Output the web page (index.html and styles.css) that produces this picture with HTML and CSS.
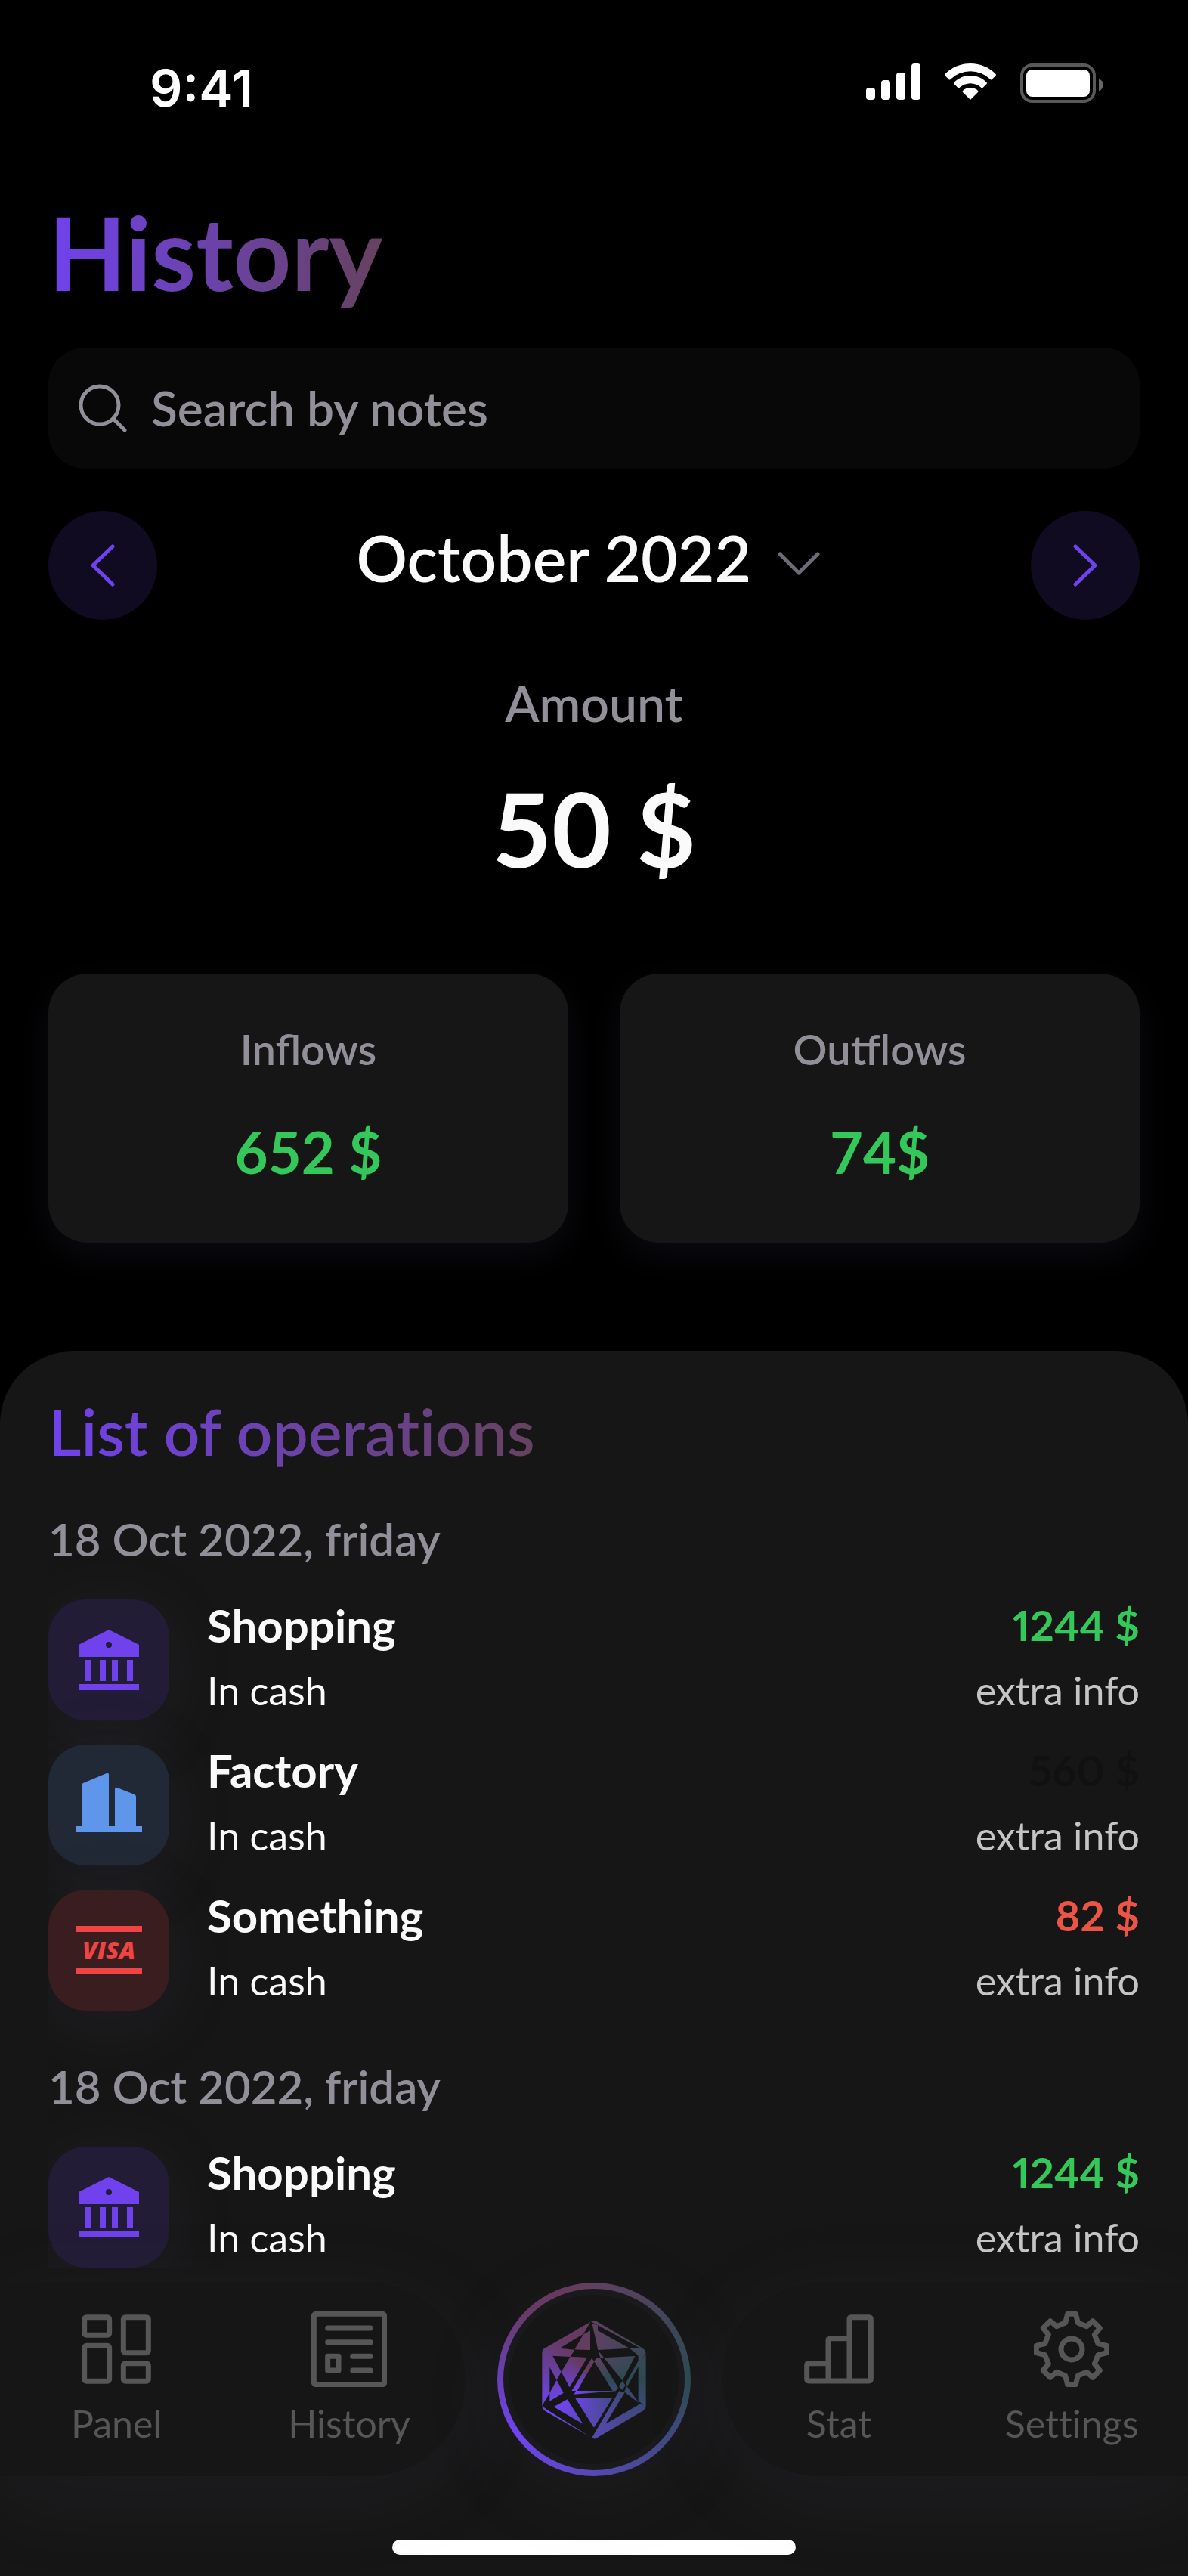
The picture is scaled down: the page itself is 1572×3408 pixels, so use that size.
FILE: index.html
```html
<!DOCTYPE html>
<html lang="en">
<head>
<meta charset="utf-8">
<meta name="viewport" content="width=device-width, initial-scale=1">
<title>History</title>
<link rel="stylesheet" href="styles.css">
</head>
<body>
<svg class="defs" width="0" height="0" aria-hidden="true">
  <defs>
    <symbol id="bank" viewBox="0 0 160 160">
      <path fill-rule="evenodd" d="M80 40 120 60V76H40V60ZM84 60a4 4 0 1 0-8 0a4 4 0 1 0 8 0Z"/>
      <path d="M48 80h8v28h-8zM68 80h8v28h-8zM84 80h8v28h-8zM104 80h8v28h-8zM40 112h80v8H40z"/>
    </symbol>
    <symbol id="building" viewBox="0 0 160 160">
      <path d="M36 108h8V54q0-2 2-3l31-13q3-1 3 2v68h8V59q0-3 3-2l23 9q2 1 2 3v39h8v8H36z"/>
    </symbol>
    <symbol id="visa" viewBox="0 0 160 160">
      <path d="M36 48h88v8H36zM36 104h88v8H36z"/>
      <text x="80" y="92" text-anchor="middle" class="visa-word">VISA</text>
    </symbol>
    <clipPath id="die" clipPathUnits="userSpaceOnUse">
      <path transform="translate(-8 -8) scale(.33333) translate(-156 -96)" d="M550 275L522 323 428 380 487 386 470 414 400 410 434 474 416 506 388 455V557L358 608V397Q358 386 368 380Z
        M549 310V387L487 385 522 325ZM470 413L537 417 467 535 434 474ZM416 506L443 557 388 590V557Z
        M555 420L565 433 497 549H475ZM475 549H638L650 550 485 563 492 549ZM557 284L579 288V310L705 380 580 387Z
        M552 274Q565 266 578 275L758 380H748L578 288 566 282Z
        M705 380H757Q768 386 770 398L768 402 740 450V412L732 402Z
        M770 402V610Q770 620 761 627L572 738Q564 742 556 735L664 550 686 556 610 680 740 605V598L761 607 740 588V450Z
        M581 390L603 417 590 420ZM573 418H587L660 537 650 550 638 549 565 433ZM603 418L727 411 677 508Z
        M677 510L689 527 676 546 662 531ZM768 402L697 530 690 518 740 430ZM695 532L742 597 684 553Z
        M490 579H636L564 695ZM458 583L520 680 404 613ZM358 608L374 622 552 733 372 631Q359 622 358 608Z"/>
    </clipPath>
  </defs>
</svg>

<header class="status">
  <span class="clock">9:41</span>
  <svg class="status-icons" width="314" height="52" viewBox="0 0 314 52" aria-hidden="true">
    <g fill="#fff">
      <rect x="0" y="32" width="12" height="16" rx="4"/>
      <rect x="20" y="22" width="12" height="26" rx="4"/>
      <rect x="40" y="12" width="12" height="36" rx="4"/>
      <rect x="60" y="0" width="12" height="48" rx="4"/>
      <path d="M138 0c13 0 25 5 33.500 14q1 1 0 2l-5 5q-1 1-2 0a38 38 0 0 0-53 0q-1 1-2 0l-5-5q-1-1 0-2C113 5 125 0 138 0z"/>
      <path d="M138 16c8 0 16 3 21.500 9q1 1 0 2l-5 5q-1 1-2 0a21 21 0 0 0-29 0q-1 1-2 0l-5-5q-1-1 0-2C122 19 130 16 138 16z"/>
      <path d="M138 32c4 0 7.500 1.500 10 4q1 1 0 2l-10 10-10-10q-1-1 0-2c2.500-2.500 6-4 10-4z"/>
      <rect x="212" y="8" width="84" height="36" rx="8"/>
    </g>
    <rect x="206" y="2" width="96" height="48" rx="14" fill="none" stroke="#595959" stroke-width="4"/>
    <path d="M308 20q6 3 6 8t-6 9z" fill="#666"/>
  </svg>
</header>

<main>
  <section class="summary">
    <h1 class="title"><span class="fade">History</span></h1>

    <label class="search">
      <svg width="64" height="64" viewBox="0 0 64 64" fill="none" stroke="#938f99" stroke-width="5" stroke-linecap="round" aria-hidden="true">
        <circle cx="28" cy="28" r="25"/><path d="M46 46 61 61"/>
      </svg>
      <input type="search" placeholder="Search by notes" aria-label="Search by notes">
    </label>

    <div class="month">
      <button class="round" type="button" aria-label="Previous month">
        <svg width="56" height="56" viewBox="0 0 56 56"><path d="M41 3 15 28 41 53"/></svg>
      </button>
      <div class="picker">
        <select aria-label="Month"><option>October 2022</option></select>
        <svg width="56" height="32" viewBox="0 0 56 32" aria-hidden="true"><path d="M3 3 28 28 53 3"/></svg>
      </div>
      <button class="round" type="button" aria-label="Next month">
        <svg width="56" height="56" viewBox="0 0 56 56"><path d="M15 3 41 28 15 53"/></svg>
      </button>
    </div>

    <div class="amount">
      <h2>Amount</h2>
      <p>50 $</p>
    </div>

    <div class="cards">
      <div class="card"><h3>Inflows</h3><p>652 $</p></div>
      <div class="card"><h3>Outflows</h3><p>74$</p></div>
    </div>
  </section>

  <section class="sheet">
    <h2 class="sheet-title"><span class="fade">List of operations</span></h2>
    <div class="operations">
      <h3 class="date">18 Oct 2022, friday</h3>
      <ul class="rows">
        <li class="row">
          <svg class="tile bank"><use href="#bank"/></svg>
          <div class="what"><strong>Shopping</strong><span>In cash</span></div>
          <div class="sum in"><strong>1244 $</strong><span>extra info</span></div>
        </li>
        <li class="row">
          <svg class="tile building"><use href="#building"/></svg>
          <div class="what"><strong>Factory</strong><span>In cash</span></div>
          <div class="sum muted"><strong>560 $</strong><span>extra info</span></div>
        </li>
        <li class="row">
          <svg class="tile visa"><use href="#visa"/></svg>
          <div class="what"><strong>Something</strong><span>In cash</span></div>
          <div class="sum out"><strong>82 $</strong><span>extra info</span></div>
        </li>
      </ul>
      <h3 class="date">18 Oct 2022, friday</h3>
      <ul class="rows">
        <li class="row">
          <svg class="tile bank"><use href="#bank"/></svg>
          <div class="what"><strong>Shopping</strong><span>In cash</span></div>
          <div class="sum in"><strong>1244 $</strong><span>extra info</span></div>
        </li>
      </ul>
    </div>

    <nav class="tabs">
      <div class="pill left">
        <a href="#panel">
          <svg viewBox="72 54 300 300"><rect x="95" y="77" width="99" height="71" rx="8"/><rect x="250" y="77" width="99" height="141" rx="8"/><rect x="95" y="190" width="99" height="141" rx="8"/><rect x="250" y="260" width="99" height="71" rx="8"/></svg>
          Panel
        </a>
        <a href="#history">
          <svg viewBox="996 54 300 300"><rect x="1006" y="64" width="280" height="280" rx="8"/><path d="M1061 120h170M1061 176h170M1160 232h71M1160 288h71M1061 232h43v56h-43z"/></svg>
          History
        </a>
      </div>
      <button class="hub" type="button" aria-label="Roll"><span class="disc"><span class="die"></span></span></button>
      <div class="pill right">
        <a href="#stat">
          <svg viewBox="60 54 300 300"><path d="M168 260H91q-8 0-8 8v54q0 8 8 8h238q8 0 8-8V85q0-8-8-8h-69q-8 0-8 8v245M252 161h-76q-8 0-8 8v161"/></svg>
          Stat
        </a>
        <a href="#settings">
          <svg viewBox="984 54 300 300"><path d="M1118 64h32l9 35 35 14 24-21 28 28-21 26 14 36 35 8v28l-35 9-14 35 21 26-28 28-24-21-35 14-9 35h-32l-9-35-35-14-25 21-28-28 21-26-14-35-34-9v-28l34-8 14-36-21-26 28-28 25 21 35-14z"/><circle cx="1134" cy="204" r="42"/></svg>
          Settings
        </a>
      </div>
    </nav>
    <div class="home"></div>
  </section>
</main>
</body>
</html>
```
FILE: styles.css
```css
* { box-sizing: border-box; margin: 0; padding: 0; }

body {
  background: #000;
  color: #fafafa;
  font-family: Lato, "Liberation Sans", sans-serif;
  font-size: 60px;
  line-height: 64px;
}
.defs { position: absolute; }
ul { list-style: none; }
button { border: 0; cursor: pointer; }

/* Status bar */
.status {
  display: flex;
  justify-content: space-between;
  align-items: center;
  padding: 72px 112px 0 198px;
}
.clock { font: 600 68px/88px Inter, sans-serif; color: #fff; }
.status-icons { margin-bottom: 12px; }

/* Summary */
.summary { padding: 94px 64px 0; }
.fade {
  display: inline-block;
  background: linear-gradient(90deg, #7042ee, #66425f);
  -webkit-background-clip: text;
  background-clip: text;
  color: transparent;
}
.title { font-size: 134px; line-height: 160px; font-weight: 700; }

.search {
  display: flex;
  align-items: center;
  gap: 32px;
  height: 160px;
  margin-top: 46px;
  padding: 0 40px;
  border-radius: 48px;
  background: #080808;
}
.search input {
  flex: 1;
  min-width: 0;
  border: 0;
  outline: 0;
  background: none;
  color: #fafafa;
  font: 600 64px/80px Lato, sans-serif;
}
.search input::placeholder { color: #938f99; opacity: 1; }

.month {
  display: flex;
  justify-content: space-between;
  align-items: flex-start;
  margin-top: 56px;
}
.round {
  display: grid;
  place-items: center;
  width: 144px;
  height: 144px;
  border-radius: 50%;
  background: #110b21;
}
.round path { fill: none; stroke: #7042ee; stroke-width: 5; stroke-linecap: round; stroke-linejoin: round; }
.picker { position: relative; margin-right: 16px; padding-top: 14px; }
.picker select {
  display: block;
  appearance: none;
  border: 0;
  padding-right: 88px;
  background: none;
  color: #fafafa;
  font: 600 84px/96px Lato, sans-serif;
}
.picker svg { position: absolute; right: 0; top: 54px; pointer-events: none; }
.picker path { fill: none; stroke: #6f6b76; stroke-width: 5; stroke-linecap: round; stroke-linejoin: round; }

.amount { margin-top: 70px; text-align: center; }
.amount h2 { font-size: 66px; line-height: 80px; font-weight: 600; color: #938f99; }
.amount p { margin-top: 46px; font-size: 136px; line-height: 160px; font-weight: 700; }

.cards { display: grid; grid-template-columns: 1fr 1fr; gap: 68px; margin-top: 112px; }
.card {
  padding: 68px 24px 72px;
  border-radius: 52px;
  background: #161616;
  box-shadow: 0 16px 48px rgba(100, 100, 150, .12);
  text-align: center;
}
.card h3 { font-size: 56px; line-height: 64px; font-weight: 600; color: #938f99; }
.card p { margin-top: 56px; font-size: 76px; line-height: 96px; font-weight: 700; color: #34c759; }

/* Operations */
.sheet {
  margin-top: 144px;
  padding: 58px 0 28px;
  border-radius: 96px 96px 0 0;
  background: #161616;
}
.sheet-title {
  padding: 0 64px;
  font-size: 84px;
  line-height: 96px;
  font-weight: 600;
  font-variant-ligatures: none;
}
.operations { margin: 0 64px; padding-top: 58px; overflow: hidden; }
.date { font-size: 60px; line-height: 72px; font-weight: 600; color: #938f99; }
.rows { display: grid; gap: 32px; margin-top: 44px; }
.rows + .date { margin-top: 64px; }
.row { display: flex; gap: 50px; }
.tile {
  width: 160px;
  height: 160px;
  border-radius: 50px;
  box-shadow: 0 16px 96px rgba(110, 108, 145, .12);
}
.tile.bank { background: #231c36; fill: #7042ee; }
.tile.building { background: #212936; fill: #5d96ea; }
.tile.visa { background: #391d1f; fill: #ee4444; }
.visa-word { font: italic 800 32px "Open Sans", sans-serif; }

.what, .sum { position: relative; display: grid; gap: 22px; align-content: start; padding-top: 2px; }
.row strong { font-size: 60px; font-weight: 700; }
.row span { font-size: 52px; font-weight: 400; }
.sum { margin-left: auto; text-align: right; }
.row .sum strong { font-size: 56px; font-variant-numeric: proportional-nums; }
.sum span { color: #c5c5c5; }
.in strong { color: #34c759; }
.out strong { color: #eb5545; }
.muted strong { color: #111; }

/* Tab bar */
.tabs {
  display: grid;
  grid-template-columns: 1fr 256px 1fr;
  gap: 42px;
  margin-top: 20px;
}
.pill {
  display: grid;
  grid-template-columns: 1fr 1fr;
  padding-top: 38px;
  background: #161616;
  box-shadow: 0 24px 120px rgba(110, 108, 145, .1);
}
.left { border-radius: 0 128px 128px 0; }
.right { border-radius: 128px 0 0 128px; }
.pill a {
  display: flex;
  flex-direction: column;
  align-items: center;
  gap: 20px;
  color: #565656;
  font-size: 50px;
  line-height: 56px;
  font-variant-ligatures: none;
  text-decoration: none;
}
.pill svg { width: 100px; height: 100px; fill: none; stroke: #565656; stroke-width: 21; stroke-linecap: round; stroke-linejoin: round; }

.hub, .die {
  background: conic-gradient(#5f4060 0deg, #42465a 50deg, #2c4a50 90deg, #3c4a78 120deg, #5648b0 180deg, #7044f0 235deg, #6840b8 270deg, #683a68 315deg, #663a60 335deg, #5f4060 360deg);
}
.hub {
  display: grid;
  height: 256px;
  padding: 8px;
  border-radius: 50%;
  box-shadow: 0 24px 120px rgba(110, 108, 145, .08);
}
.disc {
  display: grid;
  place-items: center;
  border: 8px solid #1a1a1d;
  border-radius: 50%;
  background: #161616;
}
.die { width: 256px; height: 256px; margin: -16px; clip-path: url(#die); }

.home { width: 34%; height: 20px; margin: 84px auto 0; border-radius: 10px; background: #fff; }
```
